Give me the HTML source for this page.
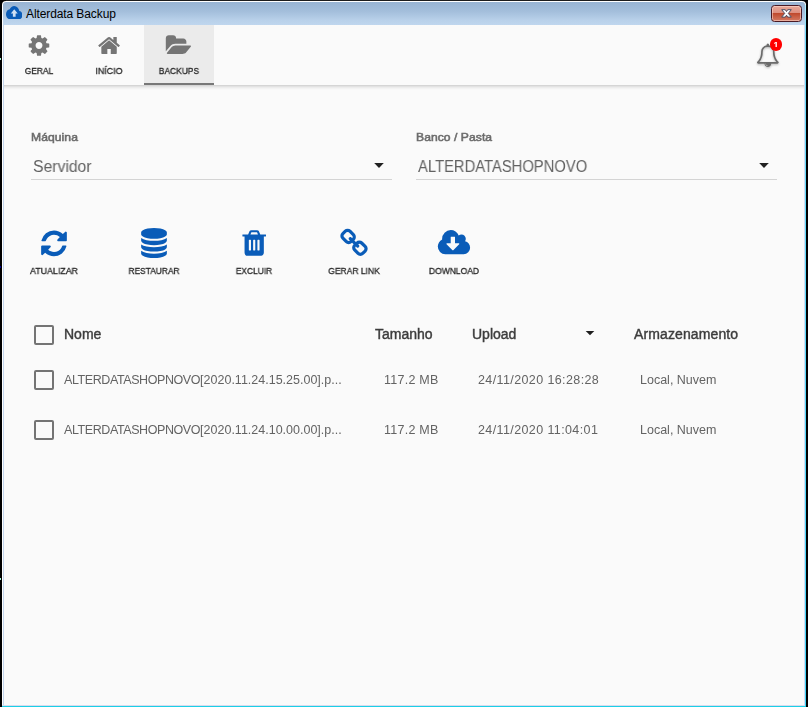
<!DOCTYPE html>
<html lang="pt-BR">
<head>
<meta charset="utf-8">
<title>Alterdata Backup</title>
<style>
html,body{margin:0;padding:0;}
body{width:808px;height:707px;overflow:hidden;background:#000;position:relative;font-family:"Liberation Sans",sans-serif;color:#212121;}
.abs{position:absolute;}
.tl,.lbl,.sel,.th,.td,.bdg{will-change:transform;}
#frame{left:0;top:0;width:808px;height:707px;overflow:hidden;}
#win{left:2px;top:1px;width:804px;height:706px;background:#fff;border-radius:4px 4px 0 0;}
#titlebar{left:3px;top:2px;width:802px;height:23px;background:linear-gradient(#98b4d3 0%,#a3bedb 40%,#b9d1ea 80%,#bfd6ee 100%);border-radius:3px 3px 0 0;}
#title{left:26px;top:7px;font-size:12px;color:#000;white-space:nowrap;line-height:14px;letter-spacing:-0.1px;}
#content{left:4px;top:25px;width:800px;height:680px;background:#fafafa;}
#lb{left:3px;top:25px;width:1px;height:681px;background:#c3d5ec;}
#rb{left:804px;top:25px;width:1px;height:681px;background:#d5dcef;}
#rc{left:805px;top:5px;width:1px;height:702px;background:linear-gradient(#b4f0fc 0,#6fdcfa 30px,#3fd3f7 100%);}
#bb1{left:2px;top:705px;width:803px;height:1px;background:#d6dbee;}
#bb2{left:2px;top:706px;width:804px;height:1px;background:#1ccfe6;}
#toolbar{left:4px;top:25px;width:800px;height:60px;background:#fafafa;}
#tsh{left:4px;top:85px;width:800px;height:5px;background:linear-gradient(#d5d5d5 0,#d5d5d5 1px,#e2e2e2 1px,#e2e2e2 2px,#ececec 2px,#ececec 3px,#f3f3f3 3px,#f3f3f3 4px,#f8f8f8 4px,#f8f8f8 5px);}
.tabbg{top:25px;width:70px;height:60px;background:#ebebeb;}
.tabul{top:83px;width:70px;height:2px;background:#787878;}
.tl{width:100px;text-align:center;font-size:9.6px;line-height:12px;color:#2a2a2a;-webkit-text-stroke:0.33px #2a2a2a;white-space:nowrap;transform:scaleX(.855);}
.lbl{font-size:11.3px;color:#6c6c6c;-webkit-text-stroke:0.55px #6c6c6c;letter-spacing:0.05px;line-height:14px;white-space:nowrap;transform-origin:0 0;}
.sel{font-size:16px;color:#626262;line-height:18px;white-space:nowrap;transform-origin:0 0;}
.line{height:1px;background:#d4d4d4;}
.caret{width:0;height:0;border-left:5px solid transparent;border-right:5px solid transparent;border-top:5px solid #212121;}
.cb{width:16px;height:16px;border:2px solid #747474;border-radius:2px;box-sizing:content-box;}
.th{font-size:14px;color:#3c3c3c;-webkit-text-stroke:0.42px #3c3c3c;line-height:16px;white-space:nowrap;transform-origin:0 0;}
.td{font-size:12.5px;color:#636363;line-height:16px;white-space:nowrap;}
</style>
</head>
<body>
<div id="frame" class="abs">
<div id="win" class="abs"></div>
<div class="abs" style="left:0;top:58px;width:1px;height:2px;background:#a6efd6"></div><div class="abs" style="left:0;top:266px;width:1px;height:2px;background:#00008c"></div><div class="abs" style="left:0;top:578px;width:1px;height:2px;background:#a6efd6"></div>
<div class="abs" style="left:6px;top:0;width:796px;height:1px;background:#1c1c1c"></div>
<div id="titlebar" class="abs"></div>
<svg class="abs" style="left:5.8px;top:5.8px" width="16.5" height="13.3" viewBox="0 4 24 16" preserveAspectRatio="none"><path fill="#0a5cb8" d="M19.35 10.040C18.670 6.590 15.640 4 12 4 9.110 4 6.600 5.640 5.350 8.040 2.340 8.360 0 10.910 0 14c0 3.310 2.690 6 6 6h13c2.760 0 5-2.240 5-5 0-2.640-2.050-4.780-4.650-4.960z"/><path fill="#cfe0f3" d="M14 13v4h-4v-4H7l5-5 5 5h-3z"/></svg>
<div id="title" class="abs">Alterdata Backup</div>
<div class="abs" style="left:771px;top:5px;width:29px;height:15px;border:1px solid #4a1a24;border-radius:3.5px;background:linear-gradient(#e9a99a 0%,#dd8f7f 46%,#c04a2e 50%,#d47a63 100%);box-shadow:inset 0 0 0 1px rgba(255,220,210,.55);"></div>
<svg class="abs" style="left:780px;top:8px" width="13" height="11" viewBox="0 0 13 11"><path d="M1.7 1.700h3.600l1.200 1.900 1.200-1.900h3.600l-3 3.700 3 3.700h-3.600l-1.200-1.900-1.200 1.900h-3.600l3-3.700z" fill="#fff" stroke="#4d4f63" stroke-width="1" stroke-linejoin="round"/></svg>
<div id="content" class="abs"></div>
<div id="toolbar" class="abs"></div><div id="tsh" class="abs"></div>
<div class="abs tabbg" style="left:144px"></div><div class="abs tabul" style="left:144px"></div>
<div id="lb" class="abs"></div>
<div id="rb" class="abs"></div>
<div id="rc" class="abs"></div>
<div id="bb1" class="abs"></div>
<div id="bb2" class="abs"></div>
<svg class="abs" style="left:28px;top:33px;" width="23" height="26" viewBox="-53.0 -37.3 1717.5 1941.3" preserveAspectRatio="none"><path fill="#757575" fill-rule="evenodd" d="M1024 896q0-106-75-181t-181-75-181 75-75 181 75 181 181 75 181-75 75-181zm512-109v222q0 12-8 23t-20 13l-185 28q-19 54-39 91 35 50 107 138 10 12 10 25t-9 23q-27 37-99 108t-94 71q-12 0-26-9l-138-108q-44 23-91 38-16 136-29 186-7 28-36 28h-222q-14 0-24.500-8.500t-11.500-21.500l-28-184q-49-16-90-37l-141 107q-10 9-25 9-14 0-25-11-126-114-165-168-7-10-7-23 0-12 8-23 15-21 51-66.500t54-70.500q-27-50-41-99l-183-27q-13-2-21-12.500t-8-23.500v-222q0-12 8-23t19-13l186-28q14-46 39-92-40-57-107-138-10-12-10-24 0-10 9-23 26-36 98.500-107.500t94.500-71.500q13 0 26 10l138 107q44-23 91-38 16-136 29-186 7-28 36-28h222q14 0 24.500 8.500t11.500 21.500l28 184q49 16 90 37l142-107q9-9 24-9 13 0 25 10 129 119 165 170 7 8 7 22 0 12-8 23-15 21-51 66.500t-54 70.500q26 50 41 98l183 28q13 2 21 12.500t8 23.500z"/></svg>
<svg class="abs" style="left:97px;top:33px;" width="25" height="26" viewBox="-67.9 -37.3 1866.3 1941.3" preserveAspectRatio="none"><path fill="#757575" fill-rule="evenodd" d="M1408 992v480q0 26-19 45t-45 19h-384v-384h-256v384h-384q-26 0-45-19t-19-45v-480q0-1 .5-3t.5-3l575-474 575 474q1 2 1 6zm223-69l-62 74q-8 9-21 11h-3q-13 0-21-7l-692-577-692 577q-12 8-24 7-13-2-21-11l-62-74q-8-10-7-23.500t11-21.500l719-599q32-26 76-26t76 26l244 204v-195q0-14 9-23t23-9h192q14 0 23 9t9 23v408l219 182q10 8 11 21.500t-7 23.500z"/></svg>
<svg class="abs" style="left:165px;top:33px;" width="28" height="26" viewBox="-59.8 -33.6 2091.8 1941.3" preserveAspectRatio="none"><path fill="#757575" fill-rule="evenodd" d="M1879 952q0 31-31 66l-336 396q-43 51-120.500 86.500t-143.500 35.500h-1088q-34 0-60.500-13t-26.500-43q0-31 31-66l336-396q43-51 120.500-86.500t143.500-35.500h1088q34 0 60.500 13t26.500 43zm-343-344v160h-832q-94 0-197 47.500t-164 119.500l-337 396-5 6q0-4-.5-12.500t-.5-12.500v-960q0-92 66-158t158-66h320q92 0 158 66t66 158v32h544q92 0 158 66t66 158z"/></svg>
<div class="abs tl" style="left:-11px;top:64.8px;transform:scaleX(0.874)">GERAL</div>
<div class="abs tl" style="left:58.900000000000006px;top:64.8px;transform:scaleX(0.919)">INÍCIO</div>
<div class="abs tl" style="left:129.2px;top:64.8px;transform:scaleX(0.877)">BACKUPS</div>
<svg class="abs" style="left:756px;top:43px;filter:drop-shadow(0 1px 1px rgba(0,0,0,.28));" width="25" height="26" viewBox="-7.6 -45.8 1906.4 1982.6" preserveAspectRatio="none"><path fill="#6b6b6b" fill-rule="evenodd" d="M912 1696q0-16-16-16-59 0-101.500-42.500t-42.500-101.500q0-16-16-16t-16 16q0 73 51.500 124.500t124.500 51.500q16 0 16-16zm-666-288h1300q-266-300-266-832 0-51-24-105t-69-103-121.500-80.500-169.500-31.500-169.500 31.500-121.500 80.500-69 103-24 105q0 532-266 832zm1482 0q0 52-38 90t-90 38h-448q0 106-75 181t-181 75-181-75-75-181h-448q-52 0-90-38t-38-90q50-42 91-88t85-119.500 74.500-158.500 50-206 19.500-260q0-152 117-282.500t307-158.500q-8-19-8-39 0-40 28-68t68-28 68 28 28 68q0 20-8 39 190 28 307 158.500t117 282.500q0 139 19.500 260t50 206 74.500 158.500 85 119.500 91 88z"/></svg>
<div class="abs" style="left:770px;top:38px;width:12px;height:12.6px;border-radius:6.3px;background:#f00;"></div><div class="abs" style="left:770px;top:38px;width:12px;height:9px;overflow:hidden"><div class="abs bdg" style="left:0;top:1px;width:12px;color:#fff;font-size:9px;font-weight:bold;line-height:12.6px;text-align:center;">1</div></div>
<div class="abs lbl" style="left:31.3px;top:130.3px;transform:scaleX(1.075)">Máquina</div>
<div class="abs sel" style="left:33px;top:158px;transform:scaleX(.983)">Servidor</div>
<svg class="abs" style="left:373.1px;top:162px" width="12" height="8" viewBox="0 0 12 8"><path fill="#212121" d="M1.2 1h9.600L6 6z"/></svg>
<div class="abs line" style="left:31px;top:179px;width:361px"></div>
<div class="abs lbl" style="left:416.3px;top:130.3px;transform:scaleX(1.072)">Banco / Pasta</div>
<div class="abs sel" style="left:418px;top:158px;transform:scaleX(.924)">ALTERDATASHOPNOVO</div>
<svg class="abs" style="left:758.1px;top:162px" width="12" height="8" viewBox="0 0 12 8"><path fill="#212121" d="M1.2 1h9.600L6 6z"/></svg>
<div class="abs line" style="left:416px;top:179px;width:361px"></div>
<svg class="abs" style="left:39px;top:228px;" width="31" height="32" viewBox="0.0 -23.9 1851.7 1911.5" preserveAspectRatio="none"><path fill="#0a5cb8" fill-rule="evenodd" d="M1639 1056q0 5-1 7-64 268-268 434.500t-478 166.500q-146 0-282.500-55t-243.500-157l-129 129q-19 19-45 19t-45-19-19-45v-448q0-26 19-45t45-19h448q26 0 45 19t19 45-19 45l-137 137q71 66 161 102t187 36q134 0 250-65t186-179q11-17 53-117 8-23 30-23h192q13 0 22.500 9.500t9.500 22.500zm25-800v448q0 26-19 45t-45 19h-448q-26 0-45-19t-19-45 19-45l138-138q-148-137-349-137-134 0-250 65t-186 179q-11 17-53 117-8 23-30 23h-199q-13 0-22.500-9.500t-9.500-22.500v-7q65-268 270-434.500t480-166.500q146 0 284 55.500t245 156.500l130-129q19-19 45-19t45 19 19 45z"/></svg>
<svg class="abs" style="left:139px;top:228px;" width="31" height="31" viewBox="0.0 0.0 1851.7 1851.7" preserveAspectRatio="none"><path fill="#0a5cb8" fill-rule="evenodd" d="M896 768q237 0 443-43t325-127v170q0 69-103 128t-280 93.500-385 34.500-385-34.500-280-93.500-103-128v-170q119 84 325 127t443 43zm0 768q237 0 443-43t325-127v170q0 69-103 128t-280 93.500-385 34.500-385-34.500-280-93.500-103-128v-170q119 84 325 127t443 43zm0-384q237 0 443-43t325-127v170q0 69-103 128t-280 93.500-385 34.500-385-34.500-280-93.500-103-128v-170q119 84 325 127t443 43zm0-1152q208 0 385 34.500t280 93.500 103 128v128q0 69-103 128t-280 93.500-385 34.500-385-34.500-280-93.500-103-128v-128q0-69 103-128t280-93.500 385-34.500z"/></svg>
<svg class="abs" style="left:239px;top:228px;" width="32" height="31" viewBox="-11.9 0.0 1911.5 1851.7" preserveAspectRatio="none"><path fill="#0a5cb8" fill-rule="evenodd" d="M704 736v576q0 14-9 23t-23 9h-64q-14 0-23-9t-9-23v-576q0-14 9-23t23-9h64q14 0 23 9t9 23zm256 0v576q0 14-9 23t-23 9h-64q-14 0-23-9t-9-23v-576q0-14 9-23t23-9h64q14 0 23 9t9 23zm256 0v576q0 14-9 23t-23 9h-64q-14 0-23-9t-9-23v-576q0-14 9-23t23-9h64q14 0 23 9t9 23zm-544-352h448l-48-117q-7-9-17-11h-317q-10 2-17 11zm928 32v64q0 14-9 23t-23 9h-96v948q0 83-47 143.500t-113 60.500h-832q-66 0-113-58.500t-47-141.500v-952h-96q-14 0-23-9t-9-23v-64q0-14 9-23t23-9h309l70-167q15-37 54-63t79-26h320q40 0 79 26t54 63l70 167h309q14 0 23 9t9 23z"/></svg>
<svg class="abs" style="left:339px;top:228px;" width="31" height="32" viewBox="0.0 -23.9 1851.7 1911.5" preserveAspectRatio="none"><path fill="#0a5cb8" fill-rule="evenodd" d="M1520 1216q0-40-28-68l-208-208q-28-28-68-28-42 0-72 32 3 3 19 18.500t21.500 21.500 15 19 13 25.500 3.500 27.500q0 40-28 68t-68 28q-15 0-27.500-3.500t-25.500-13-19-15-21.500-21.500-18.500-19q-33 31-33 73 0 40 28 68l206 207q27 27 68 27 40 0 68-26l147-146q28-28 28-67zm-703-705q0-40-28-68l-206-207q-28-28-68-28-39 0-68 27l-147 146q-28 28-28 67 0 40 28 68l208 208q27 27 68 27 42 0 72-31-3-3-19-18.500t-21.500-21.500-15-19-13-25.500-3.500-27.500q0-40 28-68t68-28q15 0 27.500 3.500t25.500 13 19 15 21.500 21.500 18.500 19q33-31 33-73zm895 705q0 120-85 203l-147 146q-83 83-203 83-121 0-204-85l-206-207q-83-83-83-203 0-123 88-209l-88-88q-86 88-208 88-120 0-204-84l-208-208q-84-84-84-204t85-203l147-146q83-83 203-83 121 0 204 85l206 207q83 83 83 203 0 123-88 209l88 88q86-88 208-88 120 0 204 84l208 208q84 84 84 204z"/></svg>
<svg class="abs" style="left:437px;top:230px;" width="35" height="26" viewBox="-47.6 122.2 2080.5 1519.0" preserveAspectRatio="none"><path fill="#0a5cb8" fill-rule="evenodd" d="M1280 928q0-14-9-23t-23-9h-224v-352q0-13-9.500-22.500t-22.500-9.500h-192q-13 0-22.500 9.500t-9.500 22.500v352h-224q-13 0-22.500 9.500t-9.500 22.500q0 14 9 23l352 352q9 9 23 9t23-9l351-351q10-12 10-24zm640 224q0 159-112.500 271.500t-271.500 112.500h-1088q-185 0-316.500-131.500t-131.500-316.500q0-130 70-240t188-165q-2-30-2-43 0-212 150-362t362-150q156 0 285.500 87t188.500 231q71-62 166-62 106 0 181 75t75 181q0 76-41 138 130 31 213.500 135.500t83.500 238.500z"/></svg>
<div class="abs tl" style="left:4.200000000000003px;top:264.8px;transform:scaleX(0.924)">ATUALIZAR</div>
<div class="abs tl" style="left:104px;top:264.8px;transform:scaleX(0.874)">RESTAURAR</div>
<div class="abs tl" style="left:204.2px;top:264.8px;transform:scaleX(0.876)">EXCLUIR</div>
<div class="abs tl" style="left:304px;top:264.8px;transform:scaleX(0.887)">GERAR LINK</div>
<div class="abs tl" style="left:404px;top:264.8px;transform:scaleX(0.887)">DOWNLOAD</div>
<div class="abs cb" style="left:34px;top:325px"></div>
<div class="abs th" style="left:64px;top:326px">Nome</div>
<div class="abs th" style="left:375px;top:326px">Tamanho</div>
<div class="abs th" style="left:472px;top:326px">Upload</div>
<svg class="abs" style="left:584px;top:330px" width="12" height="8" viewBox="0 0 12 8"><path fill="#1e1e1e" d="M1.7 1h8.600L6 5.300z"/></svg>
<div class="abs th" style="left:634px;top:326px;letter-spacing:0.12px">Armazenamento</div>
<div class="abs cb" style="left:34px;top:370px"></div>
<div class="abs td" style="left:64px;top:372px"><span style="letter-spacing:-0.41px">ALTERDATASHOPNOVO</span>[2020.11.24.15.25.00].p...</div>
<div class="abs td" style="left:384px;top:372px;letter-spacing:0.25px">117.2 MB</div>
<div class="abs td" style="left:478px;top:372px;letter-spacing:0.39px">24/11/2020 16:28:28</div>
<div class="abs td" style="left:640px;top:372px">Local, Nuvem</div>
<div class="abs cb" style="left:34px;top:420px"></div>
<div class="abs td" style="left:64px;top:422px"><span style="letter-spacing:-0.41px">ALTERDATASHOPNOVO</span>[2020.11.24.10.00.00].p...</div>
<div class="abs td" style="left:384px;top:422px;letter-spacing:0.25px">117.2 MB</div>
<div class="abs td" style="left:478px;top:422px;letter-spacing:0.39px">24/11/2020 11:04:01</div>
<div class="abs td" style="left:640px;top:422px">Local, Nuvem</div>
</div>
</body>
</html>
